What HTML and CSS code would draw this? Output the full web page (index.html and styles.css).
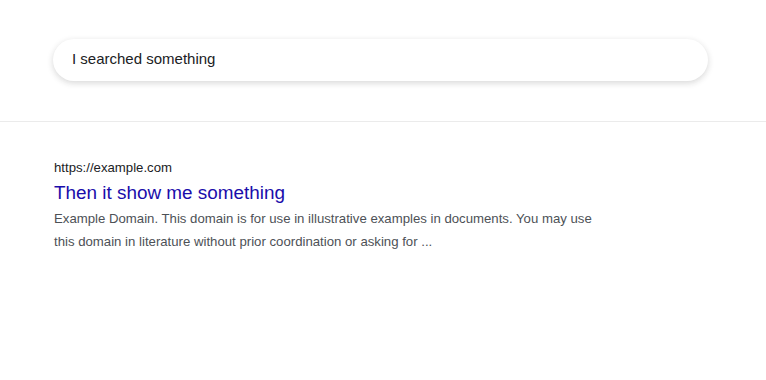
FILE: index.html
```html
<!DOCTYPE html>
<html lang="en">
<head>
    <meta charset="UTF-8">
    <meta name="viewport" content="width=device-width, initial-scale=1.0">
    <title>Search</title>
    <link rel="stylesheet" href="styles.css">
</head>
<body>
    <header class="header">
        <div class="search-box">
            <input class="search-input" type="text" value="I searched something">
        </div>
    </header>

    <main class="results">
        <div class="result">
            <div class="result-url">https://example.com</div>
            <a class="result-title" href="#">Then it show me something</a>
            <p class="result-snippet">
                Example Domain. This domain is for use in illustrative examples in documents. You may use
                this domain in literature without prior coordination or asking for ...
            </p>
        </div>
    </main>
</body>
</html>
```

FILE: styles.css
```css
body, html {
    margin: 0;
    background: #fff;
    font-family: 'Liberation Sans', Arial, sans-serif;
}

.header {
    padding: 39px 58px 40px 53px;
    border-bottom: 1px solid #ebebeb;
}

.search-box {
    height: 42px;
    box-sizing: border-box;
    border-radius: 21px;
    background: #fff;
    box-shadow: 0 2px 6px rgba(32, 33, 36, 0.18);
    display: flex;
    align-items: center;
    padding: 0 19px 3px;
}

.search-input {
    border: none;
    outline: none;
    width: 100%;
    padding: 0;
    font-family: 'Liberation Sans', Arial, sans-serif;
    font-size: 15px;
    color: #202124;
    background: transparent;
}

.results {
    padding: 36px 54px;
}

.result {
    max-width: 560px;
}

.result-url {
    font-size: 13.2px;
    line-height: 20px;
    color: #202124;
}

.result-title {
    display: block;
    margin-top: 2px;
    font-size: 18.9px;
    line-height: 26px;
    color: #1a0dab;
    text-decoration: none;
}

.result-snippet {
    margin: 1px 0 0;
    font-size: 13.2px;
    line-height: 23px;
    color: #4d5156;
}
```
